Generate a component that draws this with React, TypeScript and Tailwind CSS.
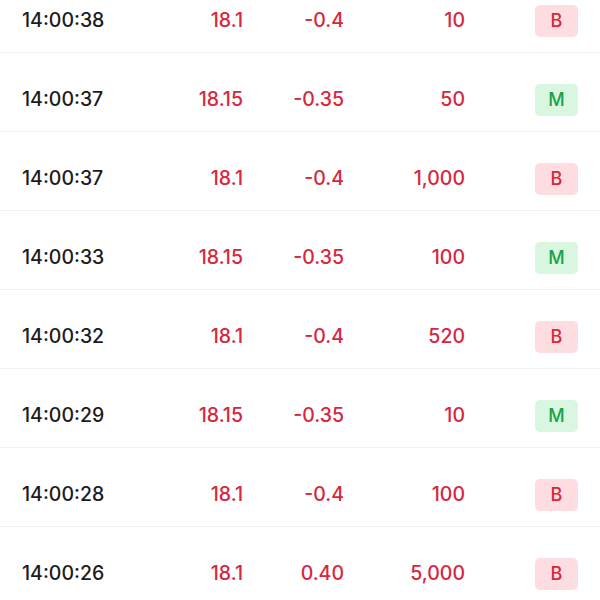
import React from 'react';

type Trade = {
  time: string;
  price: string;
  change: string;
  volume: string;
  side: 'B' | 'M';
};

const trades: Trade[] = [
  { time: '14:00:38', price: '18.1', change: '-0.4', volume: '10', side: 'B' },
  { time: '14:00:37', price: '18.15', change: '-0.35', volume: '50', side: 'M' },
  { time: '14:00:37', price: '18.1', change: '-0.4', volume: '1,000', side: 'B' },
  { time: '14:00:33', price: '18.15', change: '-0.35', volume: '100', side: 'M' },
  { time: '14:00:32', price: '18.1', change: '-0.4', volume: '520', side: 'B' },
  { time: '14:00:29', price: '18.15', change: '-0.35', volume: '10', side: 'M' },
  { time: '14:00:28', price: '18.1', change: '-0.4', volume: '100', side: 'B' },
  { time: '14:00:26', price: '18.1', change: '0.40', volume: '5,000', side: 'B' },
];

const TradeRow: React.FC<{ trade: Trade }> = ({ trade }) => {
  const isBuy = trade.side === 'B';
  return (
    <div className="grid grid-cols-[140px_81px_101px_121px_1fr] items-center h-[79px] pt-[15px] px-[22px] border-b border-[#f3f3f4] text-[19.5px] font-medium">
      <span className="text-[#1c1c1e]">{trade.time}</span>
      <span className="text-right text-[#d7263d]">{trade.price}</span>
      <span className="text-right text-[#d7263d]">{trade.change}</span>
      <span className="text-right text-[#d7263d]">{trade.volume}</span>
      <span
        className={`justify-self-end w-[43px] h-[32px] rounded-[5px] flex items-center justify-center text-[18px] ${
          isBuy ? 'bg-[#fddde0] text-[#d7263d]' : 'bg-[#d9f6e1] text-[#19a146]'
        }`}
      >
        {trade.side}
      </span>
    </div>
  );
};

export default function App() {
  return (
    <div
      className="w-[600px] h-[600px] overflow-hidden bg-white"
      style={{ fontFamily: 'Inter, "Noto Sans", sans-serif' }}
    >
      <div className="-mt-[26px]">
        {trades.map((t, i) => (
          <TradeRow key={i} trade={t} />
        ))}
      </div>
    </div>
  );
}
